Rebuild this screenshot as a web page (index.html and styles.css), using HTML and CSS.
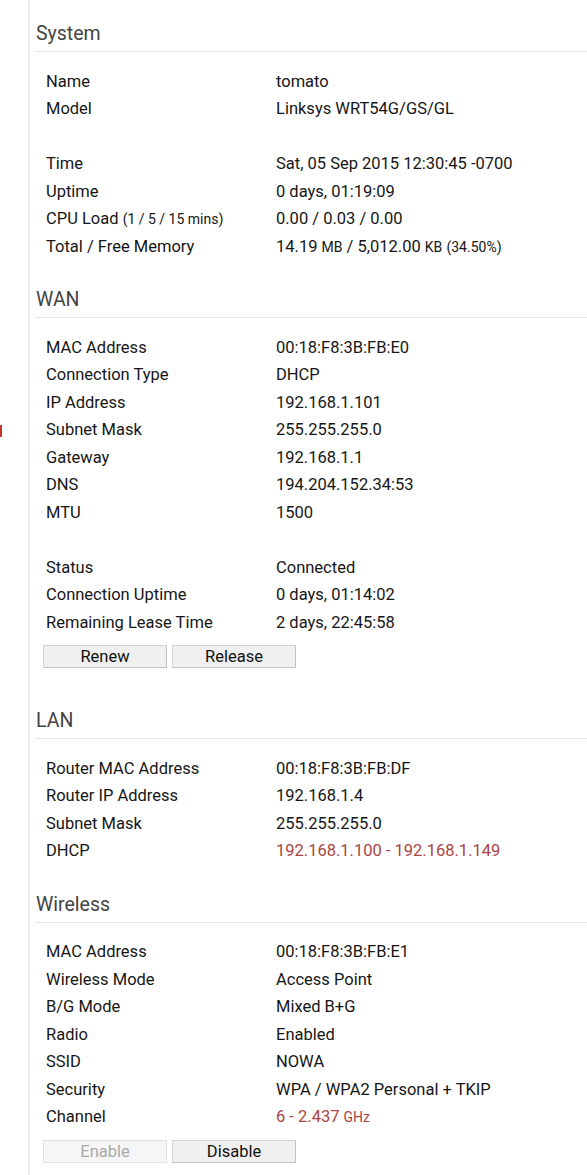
FILE: index.html
```html
<!DOCTYPE html>
<html>
<head>
<meta charset="utf-8">
<link rel="stylesheet" href="styles.css">
</head>
<body>
<span class="edge-mark"></span>
<div class="content">
  <div class="section">
    <h2 class="title">System</h2>
    <div class="rows">
      <div class="label">Name</div><div class="value">tomato</div>
      <div class="label">Model</div><div class="value">Linksys WRT54G/GS/GL</div>
      <div class="spacer"></div>
      <div class="label">Time</div><div class="value">Sat, 05 Sep 2015 12:30:45 -0700</div>
      <div class="label">Uptime</div><div class="value">0 days, 01:19:09</div>
      <div class="label">CPU Load <small>(1 / 5 / 15 mins)</small></div><div class="value">0.00 / 0.03 / 0.00</div>
      <div class="label">Total / Free Memory</div><div class="value">14.19 <small>MB</small> / 5,012.00 <small>KB</small> <small>(34.50%)</small></div>
    </div>
  </div>
  <div class="section">
    <h2 class="title">WAN</h2>
    <div class="rows">
      <div class="label">MAC Address</div><div class="value">00:18:F8:3B:FB:E0</div>
      <div class="label">Connection Type</div><div class="value">DHCP</div>
      <div class="label">IP Address</div><div class="value">192.168.1.101</div>
      <div class="label">Subnet Mask</div><div class="value">255.255.255.0</div>
      <div class="label">Gateway</div><div class="value">192.168.1.1</div>
      <div class="label">DNS</div><div class="value">194.204.152.34:53</div>
      <div class="label">MTU</div><div class="value">1500</div>
      <div class="spacer"></div>
      <div class="label">Status</div><div class="value">Connected</div>
      <div class="label">Connection Uptime</div><div class="value">0 days, 01:14:02</div>
      <div class="label">Remaining Lease Time</div><div class="value">2 days, 22:45:58</div>
    </div>
    <div class="buttons">
      <button class="btn">Renew</button><button class="btn">Release</button>
    </div>
  </div>
  <div class="section">
    <h2 class="title">LAN</h2>
    <div class="rows">
      <div class="label">Router MAC Address</div><div class="value">00:18:F8:3B:FB:DF</div>
      <div class="label">Router IP Address</div><div class="value">192.168.1.4</div>
      <div class="label">Subnet Mask</div><div class="value">255.255.255.0</div>
      <div class="label">DHCP</div><div class="value red">192.168.1.100 - 192.168.1.149</div>
    </div>
  </div>
  <div class="section">
    <h2 class="title">Wireless</h2>
    <div class="rows">
      <div class="label">MAC Address</div><div class="value">00:18:F8:3B:FB:E1</div>
      <div class="label">Wireless Mode</div><div class="value">Access Point</div>
      <div class="label">B/G Mode</div><div class="value">Mixed B+G</div>
      <div class="label">Radio</div><div class="value">Enabled</div>
      <div class="label">SSID</div><div class="value">NOWA</div>
      <div class="label">Security</div><div class="value">WPA / WPA2 Personal + TKIP</div>
      <div class="label">Channel</div><div class="value red">6 - 2.437 <small>GHz</small></div>
    </div>
    <div class="buttons">
      <button class="btn" disabled>Enable</button><button class="btn">Disable</button>
    </div>
  </div>
</div>
</body>
</html>
```
FILE: styles.css
```css
html, body {
  margin: 0;
  padding: 0;
  background: #ffffff;
}
body {
  font-family: Roboto, "Liberation Sans", sans-serif;
  color: #161616;
  position: relative;
  min-height: 1175px;
}
.edge-mark {
  position: absolute;
  left: 0;
  top: 425px;
  width: 2px;
  height: 12px;
  background: #c0392b;
}
.content {
  margin-left: 28px;
  border-left: 2px solid #eeeeee;
  padding: 22px 0 20px 6px;
  min-height: 1133px;
  display: flex;
  flex-direction: column;
}
.section + .section {
  margin-top: 28px;
}
.title {
  margin: 0;
  font-size: 19.5px;
  font-weight: 400;
  line-height: 24px;
  color: #444444;
  padding-bottom: 5px;
  border-bottom: 1px solid #e8e8e8;
}
.rows {
  margin-top: 15.5px;
  padding-left: 10px;
  display: grid;
  grid-template-columns: 230px 1fr;
  grid-auto-rows: 27.5px;
  align-items: center;
  font-size: 16.5px;
}
.spacer {
  grid-column: 1 / span 2;
}
.rows small {
  font-size: 14px;
}
.red {
  color: #a94442;
}
.buttons {
  margin: 9px 0 13px 7px;
  display: flex;
  gap: 5px;
}
.btn {
  width: 124px;
  height: 23px;
  padding: 0;
  font-family: Roboto, "Liberation Sans", sans-serif;
  font-size: 16.5px;
  line-height: 21px;
  color: #111111;
  background: #f0f0f0;
  border: 1px solid #d4d4d4;
  border-right-color: #c4c4c4;
  border-bottom-color: #c4c4c4;
  border-radius: 0;
}
.btn:disabled {
  color: #aaaaaa;
  background: #f6f6f6;
  border-color: #e0e0e0;
}
```
